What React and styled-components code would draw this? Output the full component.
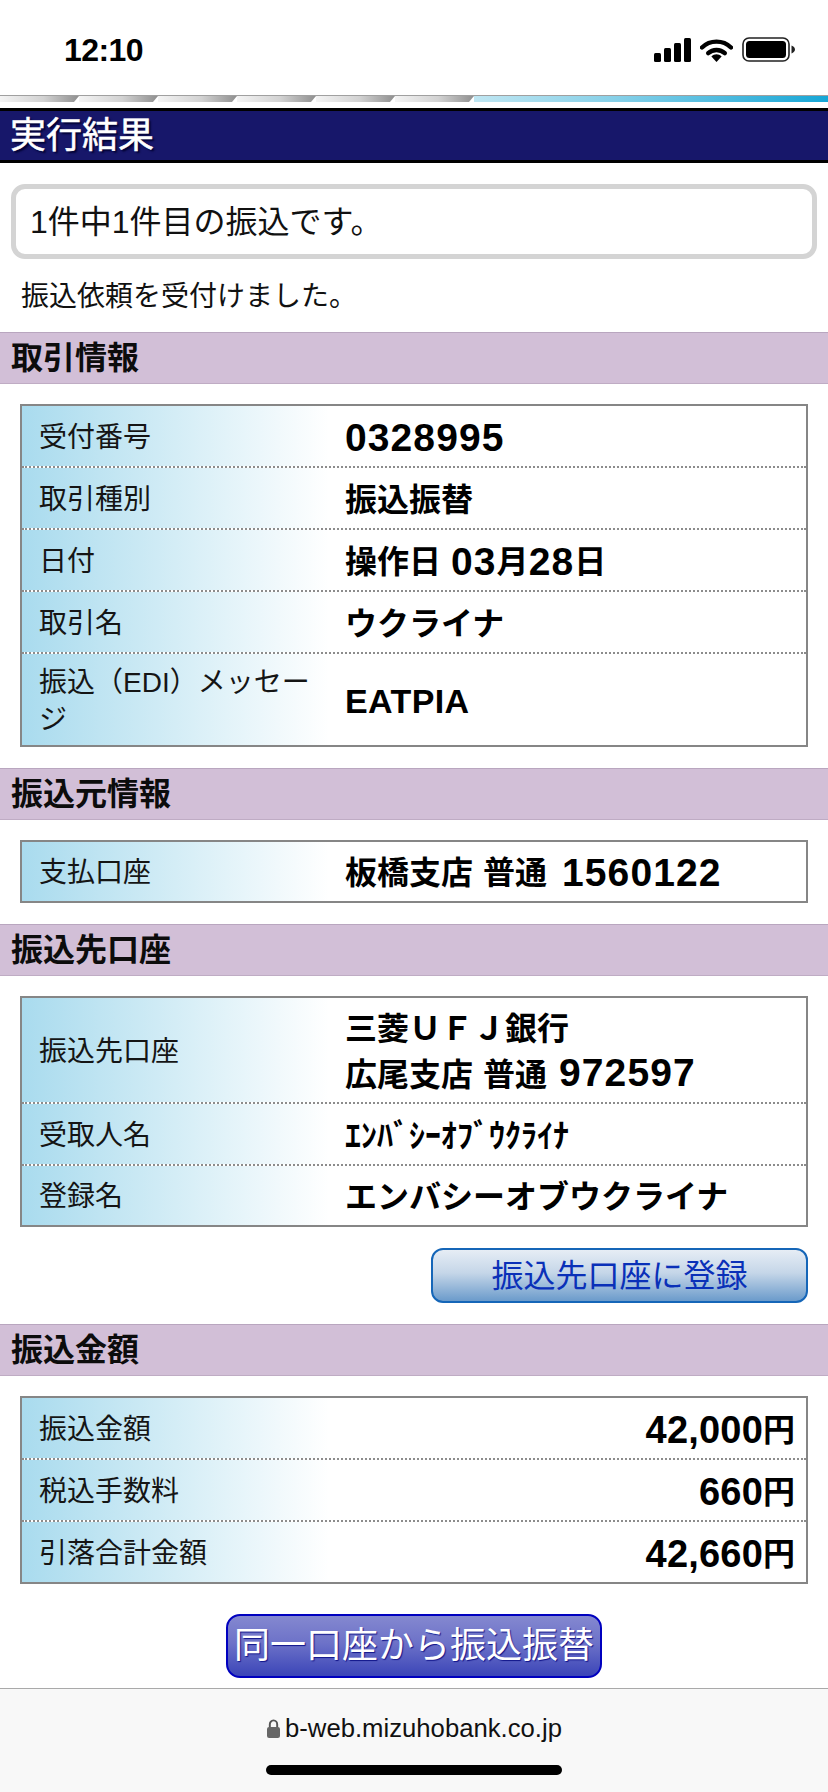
import React from 'react';
import styled, { createGlobalStyle } from 'styled-components';

const GlobalStyle = createGlobalStyle`
  html, body {
    margin: 0;
    padding: 0;
    background: #fff;
  }
  body {
    font-family: "Liberation Sans", "Noto Sans CJK JP", sans-serif;
    color: #111;
  }
`;

const Page = styled.div`
  width: 828px;
  height: 1792px;
  overflow: hidden;
  display: flex;
  flex-direction: column;
  background: #fff;
`;

const StatusBar = styled.div`
  height: 95px;
  flex: none;
  display: flex;
  justify-content: space-between;
  align-items: flex-start;
  padding: 31px 33px 0 64px;
  box-sizing: border-box;
`;

const Clock = styled.div`
  font-size: 32px;
  line-height: 38px;
  font-weight: 700;
  color: #000;
  letter-spacing: -0.6px;
`;

const StatusIcons = styled.div`
  display: flex;
  align-items: center;
  gap: 9px;
  padding-top: 6px;
`;

const Stripe = styled.div`
  height: 7px;
  flex: none;
  display: flex;
  border-top: 1px solid #a0a0a0;
  box-sizing: border-box;
`;

const StripeSegment = styled.div`
  width: 79px;
  flex: none;
  background: linear-gradient(90deg, #f4f4f4 0%, #d2d2d2 55%, #8f8f8f 100%);
  clip-path: polygon(0 0, 100% 0, calc(100% - 5px) 100%, 0 100%);
`;

const StripeRail = styled.div`
  flex: 1;
  background: linear-gradient(90deg, #bfe6f2 0%, #86d0e8 40%, #16a6d6 100%);
`;

const TitleBar = styled.h1`
  margin: 6px 0 0;
  height: 55px;
  flex: none;
  box-sizing: border-box;
  background: #17176a;
  border-top: 3px solid #000;
  border-bottom: 3px solid #000;
  padding-left: 10px;
  font-size: 36px;
  line-height: 49px;
  font-weight: 400;
  color: #fff;
  -webkit-text-stroke: 0.5px #fff;
  text-shadow: 2px 2px 2px #000030;
`;

const NoticeBox = styled.div`
  margin: 21px 11px 0;
  height: 75px;
  flex: none;
  box-sizing: border-box;
  border: 5px solid #d4d4d4;
  border-radius: 14px;
  padding-left: 14px;
  font-size: 32px;
  line-height: 66px;
  font-weight: 400;
`;

const Message = styled.p`
  margin: 0;
  height: 73px;
  flex: none;
  padding-left: 21px;
  font-size: 28px;
  line-height: 76px;
`;

const SectionHeader = styled.h2`
  margin: 0;
  height: 52px;
  flex: none;
  box-sizing: border-box;
  background: #d2bfd7;
  border-top: 1px solid #b9a6bf;
  border-bottom: 1px solid #bfacc4;
  padding-left: 11px;
  font-size: 32px;
  line-height: 50px;
  font-weight: 700;
  color: #0c0c0c;
`;

const Table = styled.div`
  margin: 20px 20px 21px;
  flex: none;
  border: 2px solid #868686;
  display: flex;
  flex-direction: column;
`;

const Row = styled.div`
  display: grid;
  grid-template-columns: 307px 1fr;
  height: ${props => props.$height || 62}px;
  box-sizing: border-box;
  border-bottom: 2px dotted #8c8c8c;

  &:last-child {
    border-bottom: none;
  }
`;

const Label = styled.div`
  display: flex;
  align-items: center;
  padding: 2px 0 0 17px;
  font-size: 28px;
  line-height: 37px;
  color: #151515;
  background: linear-gradient(90deg, #a9dbee 0%, #d4edf6 50%, #ffffff 100%);
`;

const Value = styled.div`
  display: flex;
  align-items: center;
  padding: 3px 11px 0 16px;
  font-size: 32px;
  line-height: 44px;
  font-weight: 700;
  color: #000;
  white-space: nowrap;
  justify-content: ${props => (props.$right ? 'flex-end' : 'flex-start')};
`;

const ValueLines = styled.div`
  display: flex;
  flex-direction: column;
`;

const Num = styled.span`
  font-size: 39px;
  line-height: 44px;
  letter-spacing: 1.1px;
`;

const Amount = styled.span`
  font-size: 38px;
  line-height: 44px;
  letter-spacing: 0.2px;
`;

const Latin = styled.span`
  font-size: 34px;
  line-height: 40px;
  letter-spacing: 0.4px;
`;

const Gap = styled.span`
  display: inline-block;
  width: ${props => props.$w}px;
`;

const RegisterRow = styled.div`
  display: flex;
  justify-content: flex-end;
  padding-right: 20px;
  margin-bottom: 21px;
  flex: none;
`;

const RegisterButton = styled.button`
  width: 377px;
  height: 55px;
  padding: 0;
  box-sizing: border-box;
  border: 2px solid #1566b8;
  border-radius: 12px;
  background: linear-gradient(180deg, #e6edf5 0%, #c5d6e8 45%, #6b9bcb 100%);
  font-family: inherit;
  font-size: 32px;
  line-height: 50px;
  color: #0a30b8;
`;

const RepeatRow = styled.div`
  display: flex;
  justify-content: center;
  margin-top: 9px;
  flex: none;
`;

const RepeatButton = styled.button`
  width: 376px;
  height: 64px;
  padding: 0;
  box-sizing: border-box;
  border: 2px solid #0000bf;
  border-radius: 14px;
  background: linear-gradient(180deg, #8488d0 0%, #6d72c8 45%, #3b45b8 100%);
  font-family: inherit;
  font-size: 36px;
  line-height: 58px;
  color: #fff;
  white-space: nowrap;
  text-shadow: 1px 1px 1px #10148a;
`;

const BrowserBar = styled.div`
  margin-top: 10px;
  flex: 1;
  background: #f8f8f8;
  border-top: 1px solid #a9a9a9;
  display: flex;
  flex-direction: column;
  align-items: center;
`;

const UrlRow = styled.div`
  margin-top: 23px;
  display: flex;
  align-items: center;
  gap: 5px;
  height: 32px;
  font-size: 25.7px;
  color: #111;
  padding-left: 1px;
`;

const HomeIndicator = styled.div`
  margin-top: 21px;
  width: 296px;
  height: 10px;
  border-radius: 5px;
  background: #000;
`;

const Signal = () => (
  <svg width="37" height="24" viewBox="0 0 37 24">
    <rect x="0" y="15" width="7" height="9" rx="1.5" fill="#000" />
    <rect x="10" y="10" width="7" height="14" rx="1.5" fill="#000" />
    <rect x="20" y="5" width="7" height="19" rx="1.5" fill="#000" />
    <rect x="30" y="0" width="7" height="24" rx="1.5" fill="#000" />
  </svg>
);

const Wifi = () => (
  <svg width="33" height="24" viewBox="0 0 33 24" fill="none">
    <path d="M2 9.5C10 1.7 23 1.7 31 9.5" stroke="#000" strokeWidth="4.4" strokeLinecap="round" />
    <path d="M8.2 15.2C12.7 10.9 20.3 10.9 24.8 15.2" stroke="#000" strokeWidth="4.4" strokeLinecap="round" />
    <path d="M11.4 18.6C14.2 15.6 18.8 15.6 21.6 18.6L16.5 24Z" fill="#000" />
  </svg>
);

const Battery = () => (
  <svg width="53" height="25" viewBox="0 0 53 25" fill="none">
    <rect x="1" y="1" width="46" height="23" rx="6" stroke="#222" strokeWidth="1.6" />
    <rect x="4" y="4" width="40" height="17" rx="3.5" fill="#000" />
    <path d="M49.5 8.5C51.5 9.2 53 10.8 53 12.5C53 14.2 51.5 15.8 49.5 16.5Z" fill="#222" />
  </svg>
);

const Lock = () => (
  <svg width="13" height="19" viewBox="0 0 12 19" preserveAspectRatio="none">
    <path d="M2.6 9V5.4C2.6 3.2 4 1.4 6 1.4C8 1.4 9.4 3.2 9.4 5.4V9" fill="none" stroke="#555" strokeWidth="1.8" />
    <rect x="0" y="8" width="12" height="11" rx="2" fill="#666" />
  </svg>
);

const App = () => (
  <Page>
    <GlobalStyle />
    <StatusBar>
      <Clock>12:10</Clock>
      <StatusIcons>
        <Signal />
        <Wifi />
        <Battery />
      </StatusIcons>
    </StatusBar>
    <Stripe>
      {[0, 1, 2, 3, 4, 5].map(i => <StripeSegment key={i} />)}
      <StripeRail />
    </Stripe>
    <TitleBar>実行結果</TitleBar>
    <NoticeBox>1件中1件目の振込です。</NoticeBox>
    <Message>振込依頼を受付けました。</Message>

    <SectionHeader>取引情報</SectionHeader>
    <Table>
      <Row>
        <Label>受付番号</Label>
        <Value><Num>0328995</Num></Value>
      </Row>
      <Row>
        <Label>取引種別</Label>
        <Value>振込振替</Value>
      </Row>
      <Row>
        <Label>日付</Label>
        <Value>操作日<Gap $w={10} /><Num>03</Num>月<Num>28</Num>日</Value>
      </Row>
      <Row>
        <Label>取引名</Label>
        <Value>ウクライナ</Value>
      </Row>
      <Row $height={91}>
        <Label><span>振込（EDI）メッセー<br />ジ</span></Label>
        <Value><Latin>EATPIA</Latin></Value>
      </Row>
    </Table>

    <SectionHeader>振込元情報</SectionHeader>
    <Table>
      <Row $height={59}>
        <Label>支払口座</Label>
        <Value>板橋支店<Gap $w={10} />普通<Gap $w={15} /><Num>1560122</Num></Value>
      </Row>
    </Table>

    <SectionHeader>振込先口座</SectionHeader>
    <Table>
      <Row $height={106}>
        <Label>振込先口座</Label>
        <Value>
          <ValueLines>
            <span>三菱ＵＦＪ銀行</span>
            <span>広尾支店<Gap $w={10} />普通<Gap $w={12} /><Num>972597</Num></span>
          </ValueLines>
        </Value>
      </Row>
      <Row>
        <Label>受取人名</Label>
        <Value>ｴﾝﾊﾞｼｰｵﾌﾞｳｸﾗｲﾅ</Value>
      </Row>
      <Row $height={59}>
        <Label>登録名</Label>
        <Value>エンバシーオブウクライナ</Value>
      </Row>
    </Table>
    <RegisterRow>
      <RegisterButton type="button">振込先口座に登録</RegisterButton>
    </RegisterRow>

    <SectionHeader>振込金額</SectionHeader>
    <Table>
      <Row>
        <Label>振込金額</Label>
        <Value $right><Amount>42,000</Amount>円</Value>
      </Row>
      <Row>
        <Label>税込手数料</Label>
        <Value $right><Amount>660</Amount>円</Value>
      </Row>
      <Row $height={60}>
        <Label>引落合計金額</Label>
        <Value $right><Amount>42,660</Amount>円</Value>
      </Row>
    </Table>
    <RepeatRow>
      <RepeatButton type="button">同一口座から振込振替</RepeatButton>
    </RepeatRow>

    <BrowserBar>
      <UrlRow>
        <Lock />
        <span>b-web.mizuhobank.co.jp</span>
      </UrlRow>
      <HomeIndicator />
    </BrowserBar>
  </Page>
);

export default App;
